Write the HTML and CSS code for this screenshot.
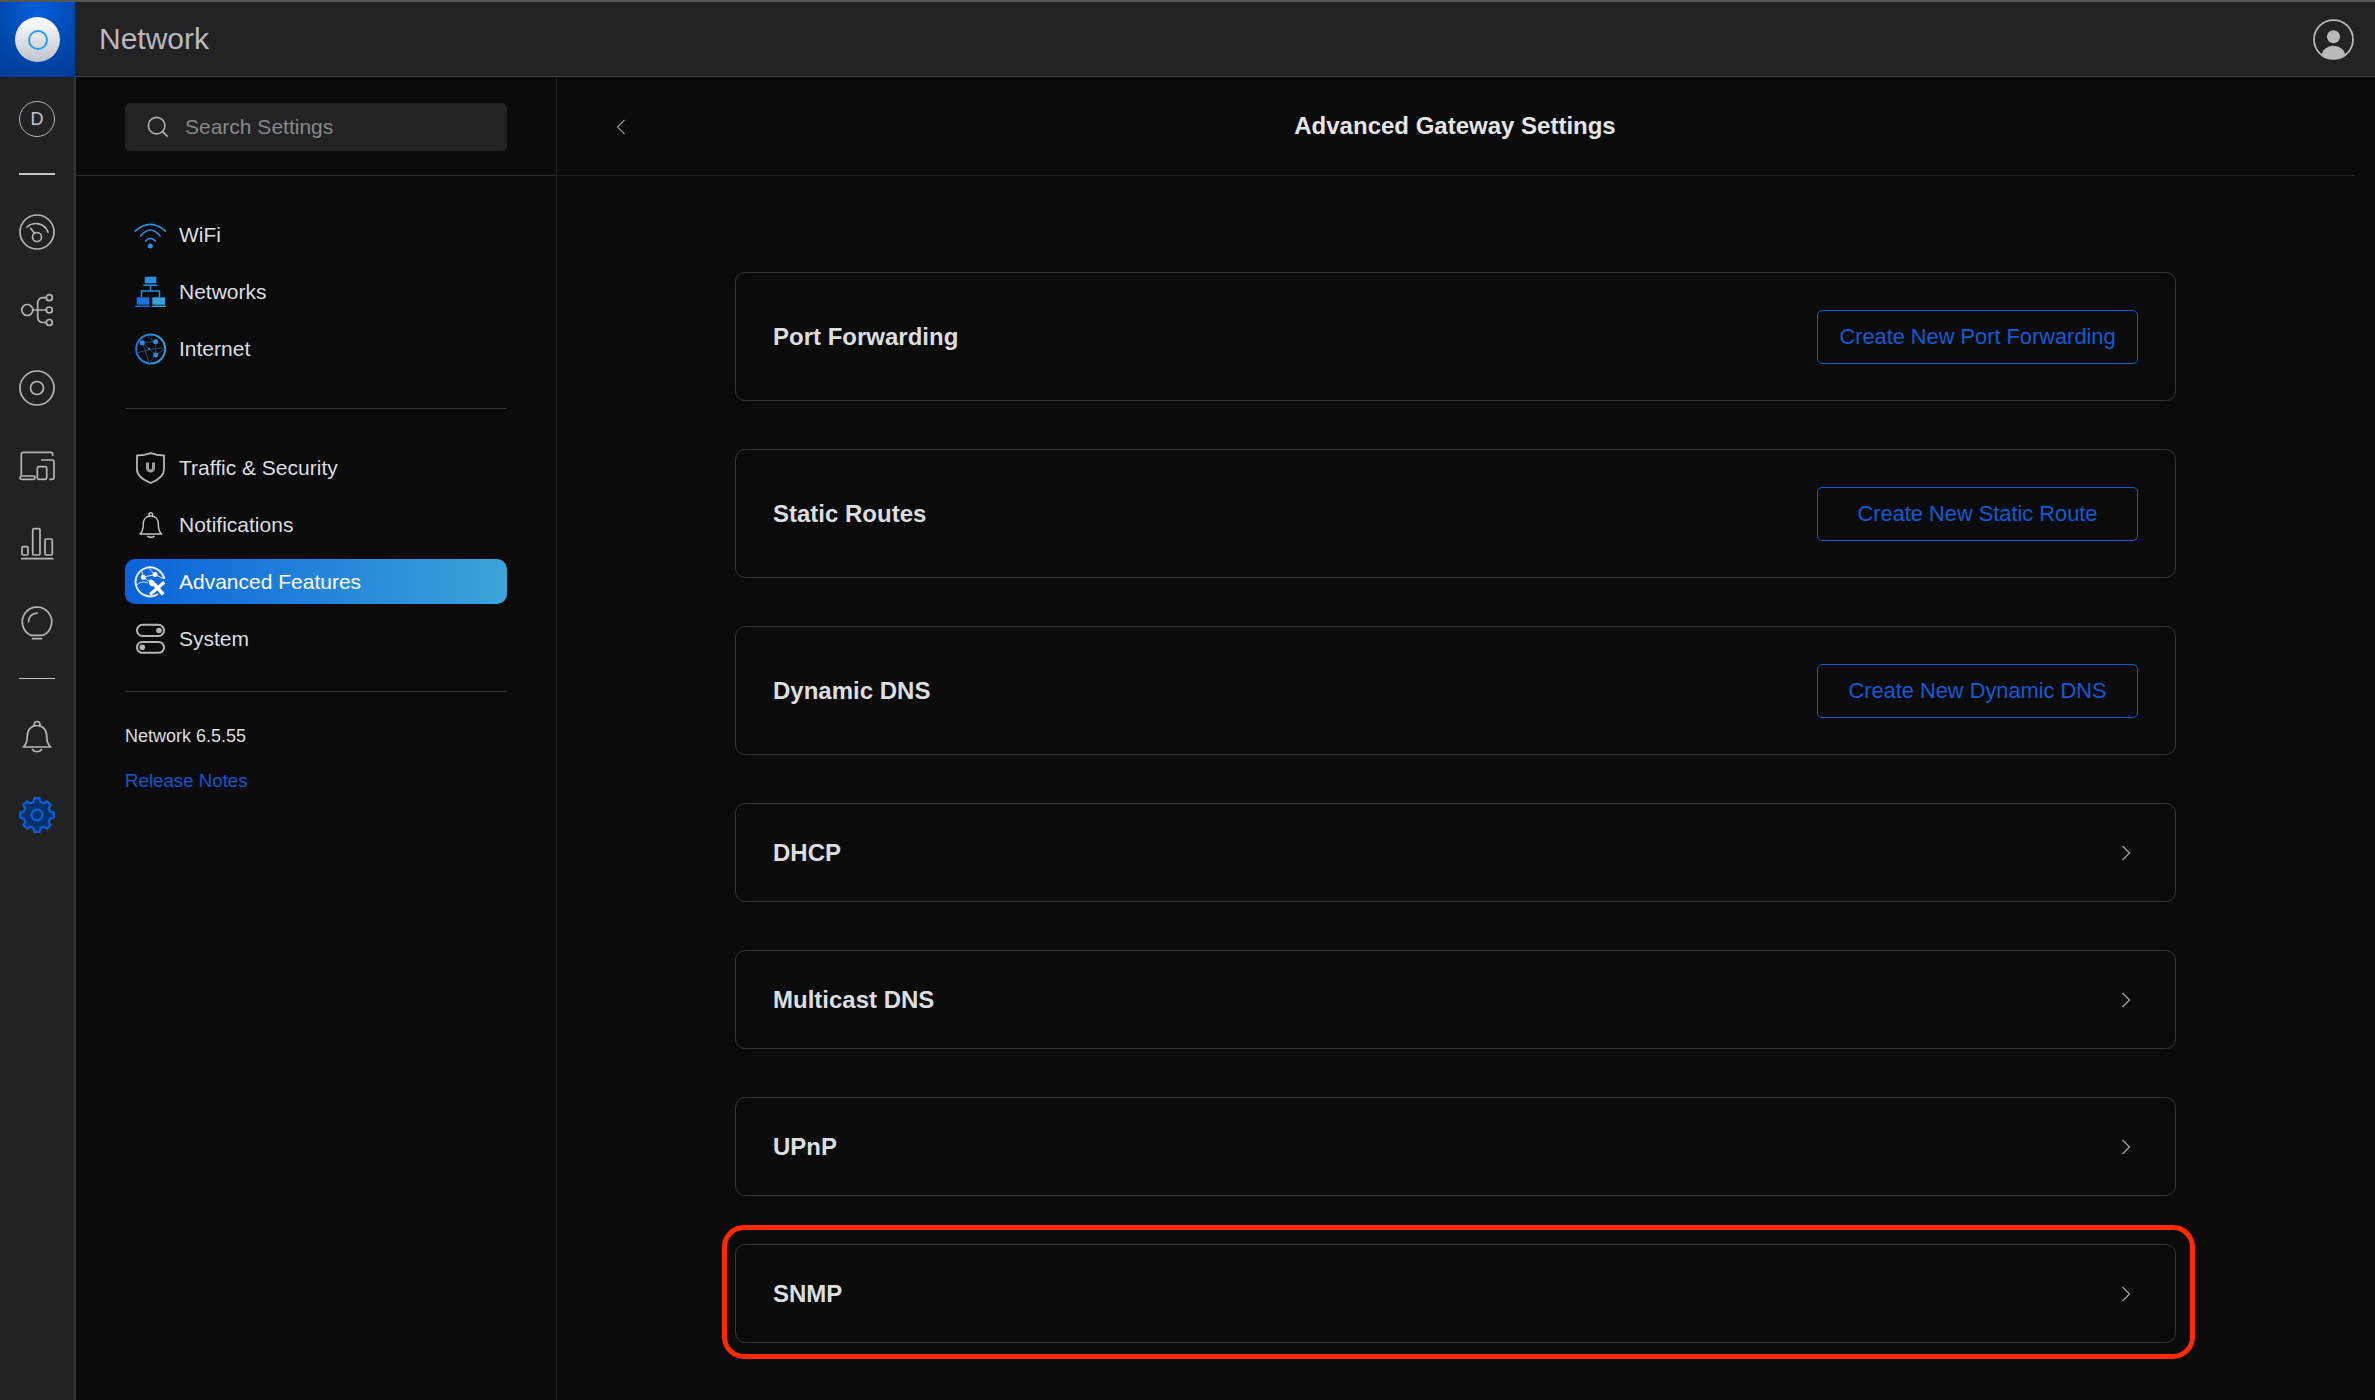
FILE: index.html
```html
<!DOCTYPE html>
<html lang="en">
<head>
    <meta charset="UTF-8">
    <meta name="viewport" content="width=device-width, initial-scale=1.0">
    <title>Network - Advanced Gateway Settings</title>
    <link rel="stylesheet" href="styles.css">
</head>
<body>
    <!-- Top bar -->
    <header class="topbar">
        <div class="logo-box">
            <div class="logo-disc"><div class="logo-ring"></div></div>
        </div>
        <div class="topbar-title">Network</div>
        <svg class="user-icon" viewBox="0 0 40 40">
            <defs><clipPath id="user-clip"><circle cx="20" cy="20" r="19"/></clipPath></defs>
            <circle cx="20" cy="20" r="19" fill="none" stroke="#b9babd" stroke-width="1.7"/>
            <circle cx="20" cy="17.3" r="6.4" fill="#b9babd"/>
            <ellipse cx="20" cy="36" rx="11.5" ry="10" fill="#b9babd" clip-path="url(#user-clip)"/>
        </svg>
    </header>

    <div class="layout">
        <!-- Icon rail -->
        <nav class="rail">
            <div class="rail-item">
                <div class="rail-letter">D</div>
            </div>
            <div class="rail-line rail-line-thick"></div>
            <div class="rail-item">
                <svg class="rail-icon" viewBox="0 0 36 36">
                    <circle cx="18" cy="18" r="17"/>
                    <path d="M8 13a13 13 0 0 1 21 5"/>
                    <circle cx="18" cy="23" r="4.5"/>
                    <path d="M11.700 14.300l3.800 5"/>
                </svg>
            </div>
            <div class="rail-item">
                <svg class="rail-icon" viewBox="0 0 36 36">
                    <circle cx="8.300" cy="18" r="5.500"/>
                    <circle cx="30.300" cy="5.700" r="3"/>
                    <circle cx="30.300" cy="18" r="3"/>
                    <circle cx="30.300" cy="30.500" r="3"/>
                    <path d="M13.800 18h13.500"/>
                    <path d="M27.300 5.700h-3.600a5 5 0 0 0 -5 5v14.800a5 5 0 0 0 5 5h3.600"/>
                </svg>
            </div>
            <div class="rail-item">
                <svg class="rail-icon" viewBox="0 0 36 36">
                    <circle cx="18" cy="18" r="17"/>
                    <circle cx="18" cy="18" r="6.500"/>
                </svg>
            </div>
            <div class="rail-item">
                <svg class="rail-icon" viewBox="0 0 36 36">
                    <path d="M2.300 26.500V6.300a2 2 0 0 1 2 -2h27.400a2 2 0 0 1 2 2v1"/>
                    <rect x="1" y="28" width="15" height="3.300" rx="1.500"/>
                    <rect x="18.300" y="18.700" width="9.400" height="12.600" rx="1.500"/>
                    <path d="M22.700 12h10.300a2 2 0 0 1 2 2v15.300a2 2 0 0 1 -2 2h-2"/>
                </svg>
            </div>
            <div class="rail-item">
                <svg class="rail-icon" viewBox="0 0 36 36">
                    <rect x="3" y="20.700" width="6" height="8.300" rx="1.200"/>
                    <rect x="13.700" y="2.700" width="7.300" height="26.300" rx="1.200"/>
                    <rect x="26" y="13" width="7.300" height="16" rx="1.200"/>
                    <path d="M2.700 32.700h31"/>
                </svg>
            </div>
            <div class="rail-item">
                <svg class="rail-icon" viewBox="0 0 36 36">
                    <path d="M12 31.300a14.700 14.700 0 1 1 12 0z"/>
                    <path d="M9.500 17.700a8.500 8.500 0 0 1 8.500 -8.500"/>
                    <path d="M13.500 34.700h9"/>
                </svg>
            </div>
            <div class="rail-line rail-line-second"></div>
            <div class="rail-item">
                <svg class="rail-icon" viewBox="0 0 36 36">
                    <path d="M4.300 28c3.500 -3 4 -6.500 4 -11c0 -6.500 4 -10.500 9.700 -10.500s9.700 4 9.700 10.500c0 4.500 .5 8 4 11z" stroke-linejoin="round"/>
                    <path d="M15 6.800v-1.300a3 3 0 0 1 6 0v1.300"/>
                    <path d="M13.500 30.500c2 3 7 3 9 0"/>
                </svg>
            </div>
            <div class="rail-item">
                <svg class="rail-icon rail-icon-active" viewBox="0 0 36 36">
                    <polygon stroke-linejoin="round" points="20.660,1.210 21.490,4.960 24.750,6.310 27.990,4.250 31.750,8.010 29.690,11.250 31.040,14.510 34.790,15.340 34.790,20.660 31.040,21.490 29.690,24.750 31.750,27.990 27.990,31.750 24.750,29.690 21.490,31.040 20.660,34.790 15.340,34.790 14.510,31.040 11.250,29.690 8.010,31.750 4.250,27.990 6.310,24.750 4.960,21.490 1.210,20.660 1.210,15.340 4.960,14.510 6.310,11.250 4.250,8.010 8.010,4.250 11.250,6.310 14.510,4.960 15.340,1.210"/>
                    <circle cx="18" cy="18" r="5.500"/>
                </svg>
            </div>
        </nav>

        <!-- Settings menu -->
        <aside class="sidebar">
            <div class="search-section">
                <div class="search-box">
                    <svg class="search-icon" viewBox="0 0 24 24">
                        <circle cx="10.500" cy="10.500" r="9"/>
                        <path d="M17 17l5 5"/>
                    </svg>
                    <span>Search Settings</span>
                </div>
            </div>

            <div class="menu-group menu-group-first">
                <a class="menu-item">
                    <svg class="menu-icon" viewBox="0 0 32 32" fill="none" stroke="#2a8fdc" stroke-width="1.700" stroke-linecap="round">
                        <path d="M1.300 12Q16.300 -1.400 31.700 12"/>
                        <path d="M6.700 17Q16.300 5 26 17"/>
                        <path d="M11.700 22Q16.300 16.600 21.300 22"/>
                        <circle cx="16.300" cy="27" r="2.500" fill="#2a8fdc" stroke="none"/>
                    </svg>
                    WiFi
                </a>
                <a class="menu-item">
                    <svg class="menu-icon" viewBox="0 0 32 32">
                        <rect x="10.700" y="0.700" width="11.600" height="6.600" fill="#2a8de0"/>
                        <rect x="9.300" y="8.500" width="14" height="1.500" fill="#2a8de0"/>
                        <rect x="15.800" y="10" width="1.500" height="5" fill="#2a8de0"/>
                        <path d="M7.500 21v-6h18v6" fill="none" stroke="#2a8de0" stroke-width="1.500"/>
                        <rect x="2.700" y="21.300" width="12.600" height="7.400" fill="#1a73e0"/>
                        <rect x="18.300" y="21.300" width="12.700" height="7.400" fill="#36a4da"/>
                        <rect x="1.300" y="29.500" width="14.400" height="1.500" fill="#1a73e0"/>
                        <rect x="18" y="29.500" width="14" height="1.500" fill="#36a4da"/>
                    </svg>
                    Networks
                </a>
                <a class="menu-item">
                    <svg class="menu-icon" viewBox="0 0 32 32">
                        <defs>
                            <linearGradient id="globe-grad" x1="0" y1="0" x2="1" y2="0">
                                <stop offset="0" stop-color="#1a73e0"/>
                                <stop offset="1" stop-color="#36a4da"/>
                            </linearGradient>
                        </defs>
                        <circle cx="16.700" cy="16" r="14.500" fill="none" stroke="url(#globe-grad)" stroke-width="2"/>
                        <path d="M8.300 9.300l13.400 -.6M8.300 9.300l13.400 12.700M21.700 8.700v13.300M3 20c8 -3 20 -5 27 -5M8.300 9.300l7 21M21.700 22l-6.500 8M21.700 22l9 -6M14 4l7.700 4.700" fill="none" stroke="#1f4a73" stroke-width="1"/>
                        <circle cx="8.300" cy="9.800" r="2.500" fill="#2a8de0"/>
                        <circle cx="21.700" cy="8.700" r="2.500" fill="#2a8de0"/>
                        <circle cx="21.700" cy="22" r="2.500" fill="#2a8de0"/>
                        <circle cx="15" cy="16" r="1.200" fill="#2a8de0"/>
                    </svg>
                    Internet
                </a>
            </div>
            <div class="menu-divider menu-divider-first"></div>
            <div class="menu-group">
                <a class="menu-item">
                    <svg class="menu-icon" viewBox="0 0 32 32">
                        <path d="M3 3.500c4.500 0 9 -.5 13.800 -2.300c4.800 1.800 9.300 2.300 13.200 2.300v14c0 6 -6.500 10.800 -13.200 13.500c-6.800 -2.700 -13.800 -7.500 -13.800 -13.500z" fill="none" stroke="#b5b5b5" stroke-width="1.800" stroke-linejoin="round"/>
                        <path d="M13.500 10.500v5.500a3 3 0 0 0 6 0v-5.500" fill="none" stroke="#9c9c9c" stroke-width="3"/>
                    </svg>
                    Traffic &amp; Security
                </a>
                <a class="menu-item">
                    <svg class="menu-icon" viewBox="0 0 32 32" fill="none" stroke="#c4c4c4" stroke-width="1.500">
                        <path d="M6 25c2.300 -2 3.300 -5 3.300 -10c0 -4.800 3 -8 7.500 -8s7.500 3.200 7.500 8c0 5 1 8 3.300 10z" stroke-linejoin="round"/>
                        <path d="M15 7v-1.500a1.800 1.800 0 0 1 3.600 0v1.500"/>
                        <path d="M13.300 27c1.500 1.800 5.500 1.800 7 0"/>
                    </svg>
                    Notifications
                </a>
                <a class="menu-item menu-item-active">
                    <svg class="menu-icon" viewBox="0 0 32 32">
                        <path d="M24 28A14.500 14.500 0 1 1 30.300 13" fill="none" stroke="#e8f0fa" stroke-width="2"/>
                        <path d="M9.300 11.200l11.700 -2.700M9.300 11.200l7 5M21 8.500l8 4M2 20c3 -4 8 -5 12 -3M9.300 11.200l-2 -8M21 8.500l-6 -6" fill="none" stroke="#dbe8f8" stroke-width="1"/>
                        <circle cx="9.300" cy="11.200" r="2.500" fill="#fff"/>
                        <circle cx="21" cy="8.500" r="2.500" fill="#fff"/>
                        <path d="M16 28.500L30.300 16.200" fill="none" stroke="#fff" stroke-width="3.200"/>
                        <path d="M20 18l9.300 10.500" fill="none" stroke="#fff" stroke-width="3.600"/>
                        <path d="M15.500 14c2.500 -1.500 6 1 5.500 5l-2.500 1.500c-3 -.5 -4.500 -3.500 -3 -6.500z" fill="#fff"/>
                    </svg>
                    Advanced Features
                </a>
                <a class="menu-item">
                    <svg class="menu-icon" viewBox="0 0 32 32" fill="none" stroke="#b5b5b5" stroke-width="2">
                        <rect x="3" y="1.800" width="27" height="11.200" rx="5.600"/>
                        <rect x="3" y="19" width="27" height="10.800" rx="5.400"/>
                        <circle cx="25" cy="7.500" r="2.800" fill="#b5b5b5" stroke="none"/>
                        <circle cx="8.300" cy="24.300" r="2.800" fill="#b5b5b5" stroke="none"/>
                    </svg>
                    System
                </a>
            </div>
            <div class="menu-divider menu-divider-second"></div>
            <div class="version">Network 6.5.55</div>
            <a class="release-notes">Release Notes</a>
        </aside>

        <!-- Main panel -->
        <main class="panel">
            <div class="panel-header">
                <svg class="back-icon" viewBox="0 0 10 16"><path d="M8.500 1L1.500 8l7 7"/></svg>
                <h1 class="panel-title">Advanced Gateway Settings</h1>
            </div>
            <div class="card-list">
                <div class="card card-tall">
                    <h2 class="card-title">Port Forwarding</h2>
                    <button class="card-button">Create New Port Forwarding</button>
                </div>
                <div class="card card-tall">
                    <h2 class="card-title">Static Routes</h2>
                    <button class="card-button">Create New Static Route</button>
                </div>
                <div class="card card-tall">
                    <h2 class="card-title">Dynamic DNS</h2>
                    <button class="card-button">Create New Dynamic DNS</button>
                </div>
                <div class="card">
                    <h2 class="card-title">DHCP</h2>
                    <svg class="chevron" viewBox="0 0 10 16"><path d="M1.500 1l7 7l-7 7"/></svg>
                </div>
                <div class="card">
                    <h2 class="card-title">Multicast DNS</h2>
                    <svg class="chevron" viewBox="0 0 10 16"><path d="M1.500 1l7 7l-7 7"/></svg>
                </div>
                <div class="card">
                    <h2 class="card-title">UPnP</h2>
                    <svg class="chevron" viewBox="0 0 10 16"><path d="M1.500 1l7 7l-7 7"/></svg>
                </div>
                <div class="card card-marked">
                    <h2 class="card-title">SNMP</h2>
                    <svg class="chevron" viewBox="0 0 10 16"><path d="M1.500 1l7 7l-7 7"/></svg>
                    <div class="red-mark"></div>
                </div>
            </div>
        </main>
    </div>
</body>
</html>
```

FILE: styles.css
```css
* {
    box-sizing: border-box;
}

html, body {
    height: 100%;
}

body {
    margin: 0;
    height: 1400px;
    overflow: hidden;
    background-color: #0b0b0c;
    color: #dcdee0;
    font-family: "Liberation Sans", Arial, sans-serif;
    font-size: 21px;
}

/* Top bar */
.topbar {
    display: flex;
    align-items: center;
    height: 77px;
    background-color: #232325;
    border-top: 2px solid #56575a;
    border-bottom: 1px solid #3e3f42;
}

.logo-box {
    display: flex;
    align-items: center;
    justify-content: center;
    width: 75px;
    height: 76px;
    margin-bottom: -1px;
    background: radial-gradient(circle at 50% 15%, #0460dc 0%, #0048ad 55%, #003a94 100%);
}

.logo-disc {
    display: flex;
    align-items: center;
    justify-content: center;
    width: 45px;
    height: 45px;
    border-radius: 50%;
    background: linear-gradient(to bottom, #ffffff, #bfc3cc);
}

.logo-ring {
    width: 20px;
    height: 20px;
    border: 2px solid #2c9bf0;
    border-radius: 50%;
}

.topbar-title {
    margin-left: 24px;
    font-size: 30px;
    color: #b8babd;
}

.user-icon {
    width: 41px;
    height: 41px;
    margin-left: auto;
    margin-right: 21px;
}

/* Page layout */
.layout {
    display: flex;
    height: 1323px;
}

/* Icon rail */
.rail {
    flex: none;
    display: flex;
    flex-direction: column;
    align-items: center;
    width: 76px;
    padding-top: 3px;
    background-color: #222224;
    border-right: 2px solid #36373a;
}

.rail-item {
    display: flex;
    align-items: center;
    justify-content: center;
    flex: none;
    height: 78px;
}

.rail-letter {
    display: flex;
    align-items: center;
    justify-content: center;
    width: 36px;
    height: 36px;
    border: 1.500px solid #b5b6b8;
    border-radius: 50%;
    font-size: 18px;
    color: #c4c6c8;
}

.rail-line {
    flex: none;
    width: 36px;
    background-color: #c4c4c4;
}

.rail-line-thick {
    height: 2px;
    margin: 15px 0 18px;
}

.rail-line-second {
    height: 1px;
    margin: 17px 0 19px;
}

.rail-icon {
    width: 36px;
    height: 36px;
    fill: none;
    stroke: #b5b6b8;
    stroke-width: 1.700;
    stroke-linecap: round;
}

.rail-icon-active {
    fill: #05326f;
    stroke: #0f5fd4;
    stroke-width: 2.200;
}

/* Settings menu */
.sidebar {
    flex: none;
    width: 481px;
    border-right: 1px solid #222326;
}

.search-section {
    height: 99px;
    padding: 26px 49px 0;
    border-bottom: 1px solid #2a2b2d;
}

.search-box {
    display: flex;
    align-items: center;
    gap: 16px;
    height: 48px;
    padding-left: 22px;
    border-radius: 5px;
    background-color: #232325;
    color: #87898c;
}

.search-icon {
    width: 22px;
    height: 22px;
    fill: none;
    stroke: #b0b1b3;
    stroke-width: 1.800;
    stroke-linecap: round;
}

.menu-group {
    display: flex;
    flex-direction: column;
    gap: 12px;
    margin: 0 49px;
}

.menu-group-first {
    margin-top: 36px;
}

.menu-item {
    display: flex;
    align-items: center;
    gap: 13px;
    height: 45px;
    padding-left: 9px;
    border-radius: 10px;
    color: #dcdee0;
}

.menu-item-active {
    background: linear-gradient(to right, #0b62da, #3ba4d9);
    color: #fff;
}

.menu-icon {
    flex: none;
    width: 32px;
    height: 32px;
}

.menu-divider {
    height: 1px;
    margin-left: 49px;
    margin-right: 49px;
    background-color: #303133;
}

.menu-divider-first {
    margin-top: 37px;
    margin-bottom: 36px;
}

.menu-divider-second {
    margin-top: 30px;
    margin-bottom: 33px;
}

.version {
    margin-left: 49px;
    line-height: 22px;
    font-size: 18px;
    color: #dcdee0;
}

.release-notes {
    display: block;
    margin-top: 23px;
    margin-left: 49px;
    line-height: 22px;
    font-size: 18.700px;
    color: #0e58d0;
}

/* Main panel */
.panel {
    flex: none;
    width: 1797px;
}

.panel-header {
    display: flex;
    align-items: center;
    justify-content: center;
    position: relative;
    height: 99px;
    padding-right: 1px;
    border-bottom: 1px solid #222326;
}

.back-icon {
    position: absolute;
    left: 59px;
    top: 42px;
    width: 10px;
    height: 16px;
    fill: none;
    stroke: #8b8c8e;
    stroke-width: 1.300;
}

.panel-title {
    margin: 0;
    font-size: 24px;
    font-weight: bold;
    color: #e4e5e7;
}

.card-list {
    display: flex;
    flex-direction: column;
    gap: 48px;
    width: 1441px;
    margin: 96px 0 0 178px;
}

/* Cards */
.card {
    display: flex;
    align-items: center;
    justify-content: space-between;
    position: relative;
    height: 99px;
    padding: 0 37px;
    border: 1px solid #343537;
    border-radius: 10px;
}

.card-tall {
    height: 129px;
}

.card-title {
    margin: 0;
    font-size: 24px;
    font-weight: bold;
    color: #dcdee0;
}

.card-button {
    width: 321px;
    height: 54px;
    padding: 0;
    border: 1.500px solid #0e5cc9;
    border-radius: 5px;
    background: transparent;
    font-family: inherit;
    font-size: 21.800px;
    color: #0e5cd6;
}

.chevron {
    width: 10px;
    height: 16px;
    margin-right: 7px;
    fill: none;
    stroke: #a0a1a3;
    stroke-width: 1.300;
}

/* Red marker around the SNMP card */
.red-mark {
    position: absolute;
    top: -20px;
    left: -14px;
    right: -20px;
    bottom: -17px;
    border: 5px solid #ff2a00;
    border-radius: 22px;
}
```
